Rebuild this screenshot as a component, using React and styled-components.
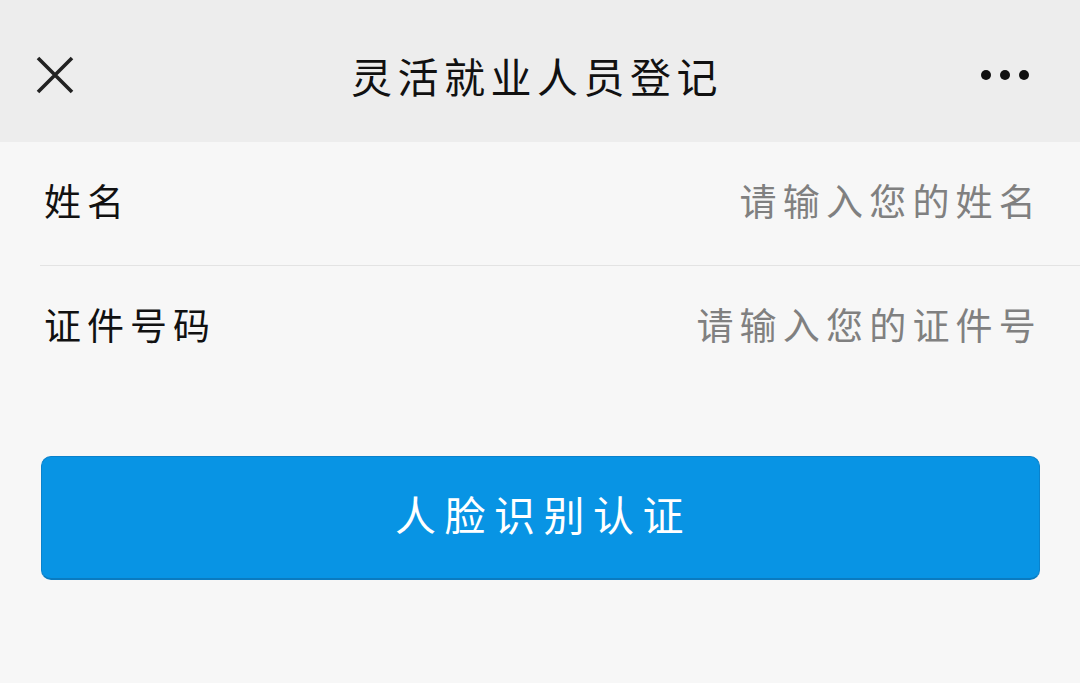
import React from "react";
import styled, { createGlobalStyle } from "styled-components";

const GlobalStyle = createGlobalStyle`
  html, body {
    margin: 0;
    padding: 0;
    background: #f7f7f7;
    font-family: "Noto Sans CJK SC", "Noto Sans", sans-serif;
  }
`;

const Page = styled.div`
  width: 1080px;
  min-height: 683px;
  background: #f7f7f7;
`;

const Header = styled.header`
  height: 142px;
  background: #ededed;
  display: grid;
  grid-template-columns: 120px 1fr 120px;
  align-items: center;
  padding-top: 8px;
  box-sizing: border-box;
`;

const IconButton = styled.div`
  display: flex;
  align-items: center;
  justify-content: ${(p) => (p.right ? "flex-end" : "flex-start")};
  padding: ${(p) => (p.right ? "0 51px 0 0" : "0 0 0 36px")};
`;

const Title = styled.h1`
  margin: 0;
  text-align: center;
  font-size: 41px;
  font-weight: 400;
  letter-spacing: 5.5px;
  padding-right: 6px;
  color: #111;
  line-height: 1;
`;

const Dots = styled.div`
  display: flex;
  gap: 9px;
`;

const Dot = styled.span`
  width: 10px;
  height: 10px;
  border-radius: 50%;
  background: #111;
`;

const Form = styled.div`
  margin-left: 40px;
`;

const Row = styled.label`
  display: flex;
  align-items: center;
  box-sizing: border-box;
  height: ${(p) => p.h}px;
  padding: 0 44px 7px 4px;
  border-bottom: ${(p) => (p.last ? "none" : "1px solid #e3e3e3")};
`;

const Label = styled.span`
  font-size: 37px;
  letter-spacing: 6px;
  color: #111;
  white-space: nowrap;
`;

const Input = styled.input`
  flex: 1;
  min-width: 0;
  border: none;
  outline: none;
  background: transparent;
  text-align: right;
  font-family: inherit;
  font-size: 37px;
  letter-spacing: 6.2px;
  margin-right: -6px;
  color: #111;
  padding: 0;

  &::placeholder {
    color: #808080;
  }
`;

const ButtonWrap = styled.div`
  padding: 68px 40px 0 41px;
`;

const Button = styled.button`
  width: 100%;
  height: 124px;
  border: 1px solid #0a82cc;
  border-bottom: 2px solid #0a7bc0;
  border-radius: 10px;
  background: #0894e4;
  color: #fff;
  font-family: inherit;
  font-size: 41px;
  letter-spacing: 8.5px;
  padding: 0 0 9px 6px;
  cursor: pointer;
`;

export default function App() {
  return (
    <Page>
      <GlobalStyle />
      <Header>
        <IconButton>
          <svg width="38" height="38" viewBox="0 0 38 38">
            <path d="M2 2 L36 36 M36 2 L2 36" stroke="#222" strokeWidth="3.6" strokeLinecap="butt" />
          </svg>
        </IconButton>
        <Title>灵活就业人员登记</Title>
        <IconButton right>
          <Dots>
            <Dot />
            <Dot />
            <Dot />
          </Dots>
        </IconButton>
      </Header>
      <Form>
        <Row h={124}>
          <Label>姓名</Label>
          <Input placeholder="请输入您的姓名" />
        </Row>
        <Row h={122} last>
          <Label>证件号码</Label>
          <Input placeholder="请输入您的证件号" />
        </Row>
      </Form>
      <ButtonWrap>
        <Button>人脸识别认证</Button>
      </ButtonWrap>
    </Page>
  );
}
